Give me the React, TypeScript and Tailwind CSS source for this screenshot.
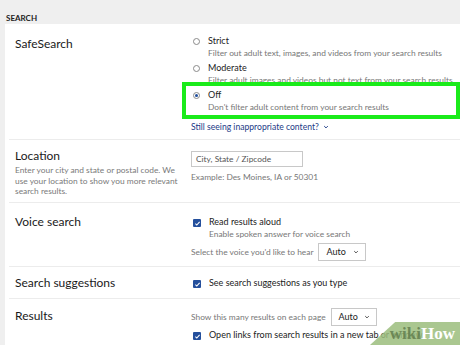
import type { ReactNode } from 'react'

const font = { fontFamily: 'Lato, "Open Sans", sans-serif' }

function Radio({ checked }: { checked?: boolean }) {
  return (
    <span className="mt-[3px] flex h-[7px] w-[7px] shrink-0 items-center justify-center rounded-full border border-[#8a8a8a] bg-white">
      {checked && <span className="h-[3px] w-[3px] rounded-full bg-[#1f4e9c]" />}
    </span>
  )
}

function Check() {
  return (
    <span className="mt-[3px] flex h-[8px] w-[8px] shrink-0 items-center justify-center rounded-[1px] bg-[#244f9c]">
      <svg viewBox="0 0 10 10" className="h-[7px] w-[7px]">
        <path d="M2 5.2l2 2 4-4.4" fill="none" stroke="white" strokeWidth={1.6} />
      </svg>
    </span>
  )
}

function Option({
  control,
  title,
  sub,
}: {
  control: ReactNode
  title: string
  sub?: string
}) {
  return (
    <div className="flex gap-[8px] whitespace-nowrap">
      {control}
      <div className="flex flex-col">
        <span className="text-[9px] leading-[12px] text-[#222]">{title}</span>
        {sub && <span className="text-[8.4px] leading-[12px] text-[#777]">{sub}</span>}
      </div>
    </div>
  )
}

function Select({ width }: { width: string }) {
  return (
    <div
      className={`flex h-[18px] items-center justify-between border border-[#c8c8c8] bg-white pl-[7px] pr-[6px] text-[9px] text-[#222] ${width}`}
    >
      <span>Auto</span>
      <svg viewBox="0 0 10 10" className="h-[6px] w-[6px]">
        <path d="M2 3.5l3 3 3-3" fill="none" stroke="#333" strokeWidth={1.4} />
      </svg>
    </div>
  )
}

function Row({
  title,
  desc,
  height,
  children,
  last,
}: {
  title: string
  desc?: string
  height: string
  children: ReactNode
  last?: boolean
}) {
  return (
    <div className={`ml-[4px] flex ${last ? '' : 'border-b border-[#ececec]'} ${height}`}>
      <div className="w-[182px] shrink-0 pl-[6px]">
        <div className="text-[12px] leading-[18px] text-[#1a1a1a]">{title}</div>
        {desc && (
          <div className="w-[168px] text-[8.4px] leading-[10.6px] text-[#7a7a7a]">{desc}</div>
        )}
      </div>
      <div className="flex-1">{children}</div>
    </div>
  )
}

export default function App() {
  return (
    <div className="relative h-[345px] w-[460px] overflow-hidden bg-[#efefef]" style={font}>
      <div className="h-[24px] pl-[6px] pt-[13px] text-[8px] font-bold leading-[10px] text-[#222]">SEARCH</div>
      <div className="ml-[5px] bg-white">
        <Row title="SafeSearch" height="h-[116px] pt-[11px]">
          <div className="flex flex-col">
            <div className="ml-[2px] flex flex-col gap-[3px]">
              <Option control={<Radio />} title="Strict" sub="Filter out adult text, images, and videos from your search results" />
              <Option control={<Radio />} title="Moderate" sub="Filter adult images and videos but not text from your search results" />
            </div>
            <div className="-ml-[9px] mt-[-4px] border-[4px] border-[#1aeb1a] bg-white pb-[2px] pl-[7px] pt-[3px]">
              <Option control={<Radio checked />} title="Off" sub="Don't filter adult content from your search results" />
            </div>
            <div className="mt-[2px] flex items-center gap-[4px] text-[8.6px] text-[#1b3a86]">
              Still seeing inappropriate content?
              <svg viewBox="0 0 10 10" className="h-[6px] w-[6px]">
                <path d="M2 3.5l3 3 3-3" fill="none" stroke="#1b3a86" strokeWidth={1.6} />
              </svg>
            </div>
          </div>
        </Row>
        <Row
          title="Location"
          desc="Enter your city and state or postal code. We use your location to show you more relevant search results."
          height="h-[63px] pt-[7px]"
        >
          <div className="pt-[4px]">
            <div className="flex h-[16px] w-[112px] items-center border border-[#c8c8c8] pl-[4px] text-[8.4px] text-[#555]">
              City, State / Zipcode
            </div>
            <div className="mt-[4px] text-[8.4px] text-[#777]">Example: Des Moines, IA or 50301</div>
          </div>
        </Row>
        <Row title="Voice search" height="h-[64px] pt-[10px]">
          <div className="ml-[2px] pt-[3px]">
            <Option control={<Check />} title="Read results aloud" sub="Enable spoken answer for voice search" />
            <div className="-ml-[2px] mt-[3px] flex items-center gap-[5px] text-[8.4px] text-[#777]">
              Select the voice you'd like to hear
              <Select width="w-[48px]" />
            </div>
          </div>
        </Row>
        <Row title="Search suggestions" height="h-[32px] pt-[7px]">
          <div className="ml-[2px] pt-[3px]">
            <Option control={<Check />} title="See search suggestions as you type" />
          </div>
        </Row>
        <Row title="Results" height="h-[60px] pt-[8px]" last>
          <div className="pt-[1px]">
            <div className="flex items-center gap-[5px] text-[8.4px] text-[#777]">
              Show this many results on each page
              <Select width="w-[46px]" />
            </div>
            <div className="ml-[2px] mt-[3px]">
              <Option control={<Check />} title="Open links from search results in a new tab or window" />
            </div>
          </div>
        </Row>
      </div>
      <div className="absolute bottom-0 right-0 flex h-[23px] w-[90px] items-center justify-end bg-[#9bbd7c]/85 pr-[5px] [clip-path:polygon(28%_0,100%_0,100%_100%,0_100%)]">
        <span className="text-[17px] font-bold leading-none" style={{ fontFamily: '"Liberation Serif", serif' }}>
          <span className="text-[#5e7a4a]/80">wiki</span>
          <span className="text-white">How</span>
        </span>
      </div>
    </div>
  )
}
